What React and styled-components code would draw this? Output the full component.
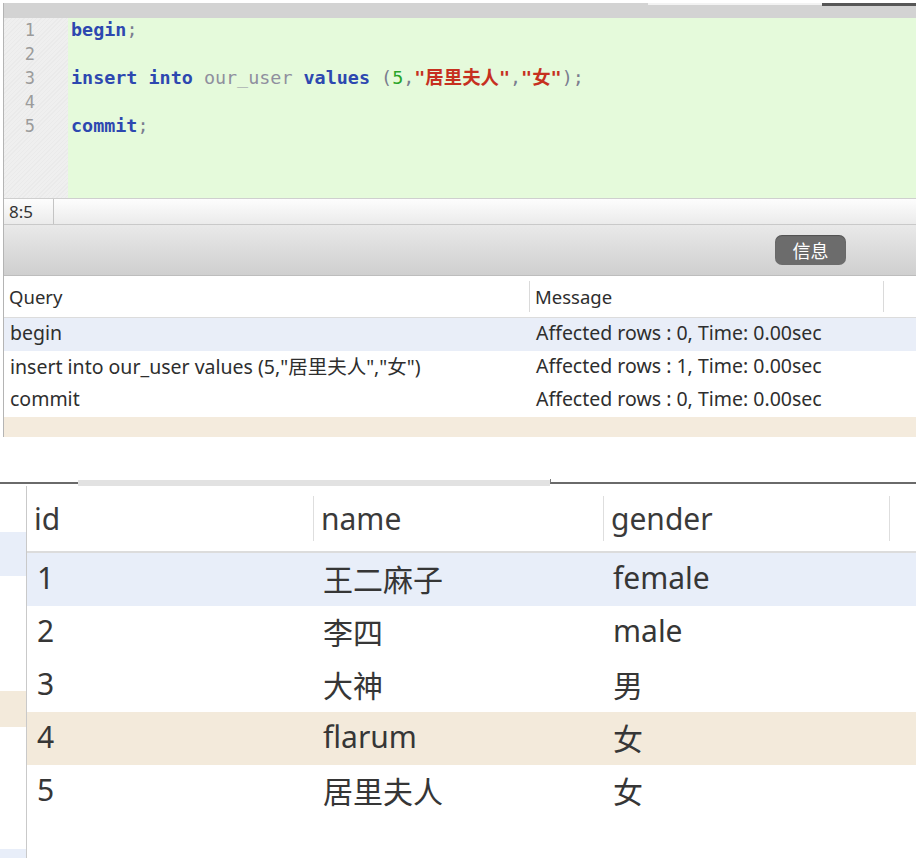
import React from 'react';
import styled, { createGlobalStyle } from 'styled-components';

const GlobalStyle = createGlobalStyle`
  html, body {
    margin: 0;
    padding: 0;
    background: #fff;
  }
  body {
    font-family: "Noto Sans", "Noto Sans CJK SC", sans-serif;
    color: #333;
  }
`;

const Page = styled.div`
  width: 921px;
  height: 862px;
  display: flex;
  flex-direction: column;
  overflow: hidden;
`;

/* ---------- query editor ---------- */

const EditorPanel = styled.section`
  width: 912px;
  margin: 3px 0 0 3px;
  border-left: 1px solid #b4b4b4;
  display: flex;
  flex-direction: column;
`;

const TopStrip = styled.div`
  height: 15px;
  display: flex;
  background: #d3d3d3;
`;

TopStrip.Tab = styled.div`
  flex: ${({ w }) => (w ? `0 0 ${w}px` : '1')};
  border-top: ${({ dark }) => (dark ? '3px solid #575757' : '2px solid #f3f3f3')};
  box-sizing: border-box;
`;

const Spacer = styled.div`
  flex: 0 0 ${({ w }) => w}px;
`;

const Editor = styled.div`
  height: 180px;
  display: flex;
`;

Editor.Gutter = styled.div`
  width: 64px;
  box-sizing: border-box;
  padding-right: 33px;
  background: repeating-linear-gradient(135deg, #efefef 0 2px, #eaeaea 2px 3px);
  font-family: "DejaVu Sans Mono", monospace;
  font-size: 17px;
  line-height: 24px;
  color: #9b9b9b;
  text-align: right;
`;

Editor.Code = styled.div`
  flex: 1;
  padding-left: 3px;
  background: #e5fadb;
  font-family: "DejaVu Sans Mono", "Noto Sans CJK SC", monospace;
  font-size: 18.4px;
  line-height: 24px;
  white-space: pre;
  color: #7b7d8f;
`;

const Kw = styled.span`
  color: #2d48b0;
  font-weight: 700;
`;

const Ident = styled.span`
  color: #8f8f9e;
`;

const Num = styled.span`
  color: #2aa52a;
`;

const Str = styled.span`
  color: #c6301f;
  font-weight: 700;
`;

const StatusBar = styled.div`
  height: 25px;
  display: flex;
  border-top: 1px solid #cfcfcf;
  background: linear-gradient(#fdfdfd, #ebebeb);
`;

StatusBar.Pos = styled.div`
  width: 44px;
  padding-left: 5px;
  border-right: 1px solid #c4c4c4;
  font-size: 17px;
  line-height: 25px;
  color: #333;
`;

const Toolbar = styled.div`
  height: 50px;
  display: flex;
  align-items: center;
  justify-content: flex-end;
  padding-right: 70px;
  border-top: 1px solid #c9c9c9;
  border-bottom: 1px solid #bdbdbd;
  background: linear-gradient(#e9e9e9, #cfcfcf);
`;

const InfoButton = styled.button`
  width: 71px;
  height: 30px;
  border: none;
  border-radius: 7px;
  background: #6c6c6c;
  color: #fff;
  font-family: "Noto Sans CJK SC", sans-serif;
  font-size: 18px;
  padding: 0;
  box-shadow: inset 0 1px 1px rgba(0, 0, 0, 0.25);
`;

const Results = styled.div`
  display: flex;
  flex-direction: column;
  font-size: 19.5px;
  color: #2e2e2e;
`;

const ResultRow = styled.div`
  display: grid;
  grid-template-columns: 525px 354px 1fr;
  height: ${({ h }) => h || 33}px;
  align-items: center;
  background: ${({ bg }) => bg || '#fff'};
`;

const ResultHead = styled(ResultRow)`
  height: 31px;
  padding: 5px 0;
  align-items: stretch;
  border-bottom: 1px solid #dcdcdc;
`;

const HeadCell = styled.div`
  display: flex;
  align-items: center;
  padding-left: 5px;
  font-size: 18.5px;
  white-space: nowrap;

  & + & {
    border-left: 1px solid #dadada;
  }
`;

const Cell = styled.div`
  padding: 0 0 4px 6px;
  white-space: nowrap;

  & + & {
    padding-left: 7px;
  }
`;

/* ---------- data grid ---------- */

const GridPanel = styled.section`
  width: 916px;
  margin-top: 42px;
  display: flex;
  flex-direction: column;
`;

const TabStrip = styled.div`
  height: 7px;
  display: flex;
`;

TabStrip.Dark = styled.div`
  flex: ${({ w }) => (w ? `0 0 ${w}px` : '1')};
  box-sizing: border-box;
  border-bottom: 2px solid #6a6a6a;
  border-left: ${({ edge }) => (edge ? '1px solid #7a7a7a' : 'none')};
  height: 5px;
`;

TabStrip.Light = styled.div`
  flex: 0 0 ${({ w }) => w}px;
  margin-top: 1px;
  background: #e2e2e2;
`;

const GridBody = styled.div`
  height: 372px;
  display: flex;
`;

const Sidebar = styled.div`
  width: 26px;
  border-right: 1px solid #c9c9c9;
  display: flex;
  flex-direction: column;
`;

const SideRow = styled.div`
  height: ${({ h }) => h}px;
  flex-shrink: 0;
  background: ${({ bg }) => bg || '#fff'};
`;

const Grid = styled.div`
  flex: 1;
  display: flex;
  flex-direction: column;
  font-size: 30px;
  color: #363636;
`;

const GridRow = styled.div`
  display: grid;
  grid-template-columns: 286px 290px 286px 1fr;
  height: 53px;
  align-items: center;
  background: ${({ bg }) => bg || '#fff'};
`;

const GridHead = styled(GridRow)`
  height: 45px;
  padding: 10px 0;
  align-items: stretch;
  border-bottom: 2px solid #dcdcdc;
`;

const GridHeadCell = styled.div`
  display: flex;
  align-items: center;
  padding-left: 7px;
  color: #3a3a3a;

  & + & {
    border-left: 1px solid #dedede;
  }
`;

const GridCell = styled.div`
  padding: 0 0 4px 10px;
  white-space: nowrap;
`;

const BLUE = '#e8eef9';
const TAN = '#f3eadb';

const results = [
  { q: 'begin', m: 'Affected rows : 0, Time: 0.00sec', bg: '#e9eef8' },
  { q: 'insert into our_user values (5,"居里夫人","女")', m: 'Affected rows : 1, Time: 0.00sec' },
  { q: 'commit', m: 'Affected rows : 0, Time: 0.00sec' },
];

const users = [
  { id: 1, name: '王二麻子', gender: 'female', bg: BLUE },
  { id: 2, name: '李四', gender: 'male' },
  { id: 3, name: '大神', gender: '男' },
  { id: 4, name: 'flarum', gender: '女', bg: TAN },
  { id: 5, name: '居里夫人', gender: '女' },
];

const App = () => (
  <>
    <GlobalStyle />
    <Page>
      <EditorPanel>
        <TopStrip>
          <Spacer w={644} />
          <TopStrip.Tab w={174} />
          <TopStrip.Tab dark />
        </TopStrip>
        <Editor>
          <Editor.Gutter>
            <div>1</div>
            <div>2</div>
            <div>3</div>
            <div>4</div>
            <div>5</div>
          </Editor.Gutter>
          <Editor.Code>
            <div><Kw>begin</Kw>;</div>
            <div> </div>
            <div>
              <Kw>insert</Kw> <Kw>into</Kw> <Ident>our_user</Ident> <Kw>values</Kw> (<Num>5</Num>,<Str>"居里夫人"</Str>,<Str>"女"</Str>);
            </div>
            <div> </div>
            <div><Kw>commit</Kw>;</div>
          </Editor.Code>
        </Editor>
        <StatusBar>
          <StatusBar.Pos>8:5</StatusBar.Pos>
        </StatusBar>
        <Toolbar>
          <InfoButton>信息</InfoButton>
        </Toolbar>
        <Results>
          <ResultHead>
            <HeadCell>Query</HeadCell>
            <HeadCell>Message</HeadCell>
            <HeadCell />
          </ResultHead>
          {results.map((r) => (
            <ResultRow key={r.q} bg={r.bg}>
              <Cell>{r.q}</Cell>
              <Cell>{r.m}</Cell>
            </ResultRow>
          ))}
          <ResultRow h={20} bg="#f4ebdd" />
        </Results>
      </EditorPanel>

      <GridPanel>
        <TabStrip>
          <TabStrip.Dark w={78} />
          <TabStrip.Light w={472} />
          <TabStrip.Dark edge />
        </TabStrip>
        <GridBody>
          <Sidebar>
            <SideRow h={46} />
            <SideRow h={44} bg={BLUE} />
            <SideRow h={115} />
            <SideRow h={36} bg={TAN} />
            <SideRow h={122} />
            <SideRow h={9} bg={BLUE} />
          </Sidebar>
          <Grid>
            <GridHead>
              <GridHeadCell>id</GridHeadCell>
              <GridHeadCell>name</GridHeadCell>
              <GridHeadCell>gender</GridHeadCell>
              <GridHeadCell />
            </GridHead>
            {users.map((u) => (
              <GridRow key={u.id} bg={u.bg}>
                <GridCell>{u.id}</GridCell>
                <GridCell>{u.name}</GridCell>
                <GridCell>{u.gender}</GridCell>
              </GridRow>
            ))}
          </Grid>
        </GridBody>
      </GridPanel>
    </Page>
  </>
);

export default App;
